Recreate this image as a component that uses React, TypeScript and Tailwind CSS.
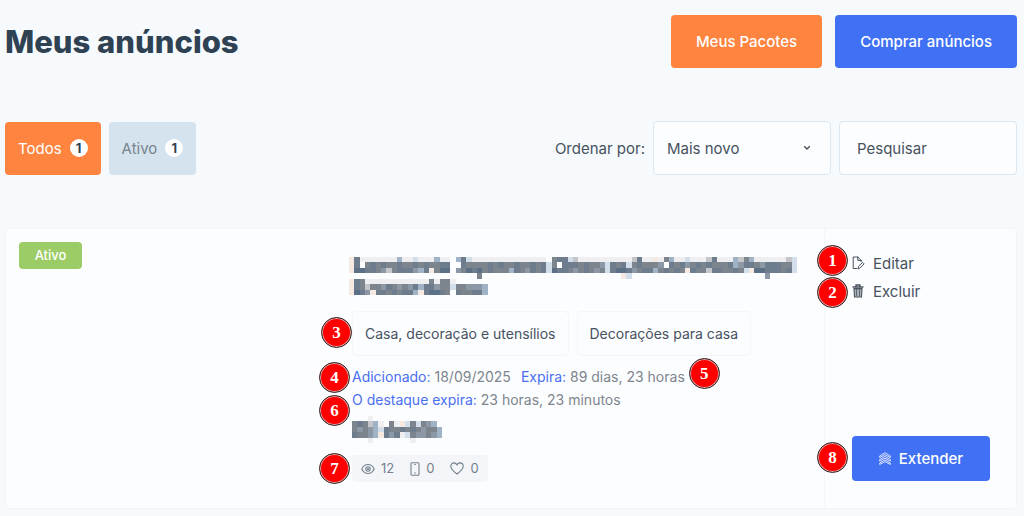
import React, { useState } from 'react';

type IconProps = { className?: string };

const EditIcon = ({ className }: IconProps) => (
  <svg className={className} viewBox="0 0 13 14" fill="none" stroke="currentColor" strokeLinejoin="round" strokeLinecap="round">
    <path d="M4.5 12.5H1.2V1h4.6l3.4 3.4v1.2M5.8 1v3.4h3.4" />
    <path d="M6 12.7l.6-2.4 4-3.9 1.5 1.5-4 4z" />
  </svg>
);

const TrashIcon = ({ className }: IconProps) => (
  <svg className={className} viewBox="0 0 12 14" fill="none" stroke="currentColor">
    <path d="M1 3h10M4 2.8V1h4v1.8" strokeWidth="1.3" strokeLinecap="round" />
    <path d="M2 4.6h8l-.5 8.4h-7z" fill="currentColor" fillOpacity="0.45" strokeWidth="1.1" />
    <path d="M4.5 5v7M7.5 5v7" strokeWidth=".8" />
  </svg>
);

const EyeIcon = ({ className }: IconProps) => (
  <svg className={className} viewBox="0 0 14 12" fill="none" stroke="currentColor" strokeWidth="1.1">
    <path d="M.8 6C2 3.300 4.300 1.500 7 1.500S12 3.300 13.200 6C12 8.700 9.700 10.500 7 10.500S2 8.700.8 6z" />
    <circle cx="7" cy="6" r="2.200" />
    <circle cx="7" cy="6" r=".5" fill="currentColor" />
  </svg>
);

const PhoneIcon = ({ className }: IconProps) => (
  <svg className={className} viewBox="0 0 10 14" fill="none" stroke="currentColor" strokeWidth="1.1">
    <rect x="1" y=".8" width="8" height="12.4" rx="1" />
    <path d="M4.200 11h1.600M4.200 2.500h1.600" />
  </svg>
);

const HeartIcon = ({ className }: IconProps) => (
  <svg className={className} viewBox="0 0 14 13" fill="none" stroke="currentColor" strokeWidth="1.1" strokeLinejoin="round">
    <path d="M7 12C4 9.800.8 7.300.8 4.300.8 2.300 2.200.9 4 .9c1.300 0 2.400.7 3 2 .6-1.300 1.700-2 3-2 1.800 0 3.200 1.400 3.200 3.400C13.200 7.300 10 9.800 7 12z" />
  </svg>
);

const ExtendIcon = ({ className }: IconProps) => (
  <svg className={className} viewBox="0 0 12 13" fill="none" stroke="currentColor" strokeWidth=".8" strokeLinejoin="round">
    <path d="M.7 3.900L6 .7l5.300 3.200v1.700L6 2.600.7 5.600z" />
    <path d="M.7 7.500L6 4.400l5.300 3.100v1.700L6 6.200.7 9.200z" />
    <path d="M.7 11L6 7.900l5.300 3.100v1.500L6 9.600.7 12.500z" />
  </svg>
);

const ChevronIcon = ({ className }: IconProps) => (
  <svg className={className} viewBox="0 0 8 6" fill="none" stroke="currentColor" strokeWidth="1.4">
    <path d="M1.200 1.200L4 4l2.800-2.800" />
  </svg>
);

// Censored text: every letter is one shade of the mosaic
const shades: Record<string, string> = {
  a: '#f5e9e1',
  b: '#efeff2',
  c: '#d2deea',
  d: '#c5c6ca',
  e: '#9fb2c6',
  f: '#8c98a5',
  g: '#7c858e',
  h: '#6e7d8d',
  i: '#5b6f86',
};

const titleMosaic = [
  'ahbbbbbbbebbcbbbebb ehcbbbbbbbbbbbbbb ghhcdbbbbbbbbbbdhbbabgebbcbbbdhbbbedgebbbbbbdc',
  'ah ghghgghgghghgghh  hgggghghgghgghghcg hhhghggfchghcghgggf hghfghghggghefhhgfhhhggc',
  'aiihhgfdghhhfehagii fgihighgggehgfhghcihhgfghgfgchiihfghheghghgahggdhhgghgcaiihhhghc',
  '                        g                          ac                         f     ',
  'ahgbbbbbbbbbbbbgbggb                                                                ',
  'ahgdggfhgfgfhehhfggcggfffe                                                          ',
  'aihfahhghghheahiihg hgghhe                                                          ',
];

const priceMosaic = [
  '   b             ',
  'ghgdeb gbacgcgfe ',
  'gfgfechgghghgfgge',
  'hggfeahfhbcgffgfe',
  '   b       b     ',
];

function Mosaic({ rows, label, className }: { rows: string[]; label: string; className?: string }) {
  return (
    <svg
      className={className}
      viewBox={`0 0 ${rows[0].length * 16} ${rows.length * 16}`}
      preserveAspectRatio="none"
      shapeRendering="crispEdges"
      role="img"
      aria-label={label}
    >
      {rows.map((row, y) =>
        row.split('').map((cell, x) =>
          shades[cell] ? <rect key={`${x}-${y}`} x={x * 16} y={y * 16} width={16} height={16} fill={shades[cell]} /> : null
        )
      )}
    </svg>
  );
}

function Marker({ n, className }: { n: number; className: string }) {
  return (
    <span
      className={`absolute flex size-[31px] items-center justify-center rounded-full border border-[#333] bg-[#fe0000] font-['Liberation_Serif',serif] text-[17px] leading-none font-bold text-white ring-1 ring-[#d9a9a9] ring-inset ${className}`}
    >
      {n}
    </span>
  );
}

function Tab({ label, count, active, onClick }: { label: string; count: number; active: boolean; onClick: () => void }) {
  return (
    <button
      onClick={onClick}
      className={`flex h-[53px] items-center gap-2 rounded px-[13px] ${active ? 'bg-[#fe8440] text-white' : 'bg-[#d5e3ee] text-[#77838f]'}`}
    >
      {label}
      <span className="flex size-[18px] items-center justify-center rounded-full bg-white text-[13px] font-bold text-[#2f4254]">
        {count}
      </span>
    </button>
  );
}

function App() {
  const [tab, setTab] = useState('todos');
  const [order, setOrder] = useState('novo');
  const [search, setSearch] = useState('');

  return (
    <div className="min-h-screen bg-[#f7fafd] pt-[15px] pr-[7px] pb-[7px] pl-[5px] font-[Inter,sans-serif] text-[15px] leading-[23px] text-[#47525e]">
      {/* Header */}
      <header className="flex items-center justify-between">
        <h1 className="text-[31px] leading-[40px] font-extrabold text-[#2f4254]">Meus anúncios</h1>
        <div className="flex gap-[13px] font-medium text-white">
          <button className="h-[53px] rounded bg-[#fe8440] px-[25px]">Meus Pacotes</button>
          <button className="h-[53px] rounded bg-[#4071f4] px-[25px]">Comprar anúncios</button>
        </div>
      </header>

      {/* Filters */}
      <div className="mt-[53px] flex items-center justify-between">
        <div className="flex gap-2">
          <Tab label="Todos" count={1} active={tab === 'todos'} onClick={() => setTab('todos')} />
          <Tab label="Ativo" count={1} active={tab === 'ativo'} onClick={() => setTab('ativo')} />
        </div>
        <div className="flex items-center gap-2">
          <label htmlFor="order">Ordenar por:</label>
          <div className="relative">
            <select
              id="order"
              value={order}
              onChange={(e) => setOrder(e.target.value)}
              className="h-[54px] w-[178px] appearance-none rounded border border-[#dbe6f0] bg-[#fcfdff] px-[13px]"
            >
              <option value="novo">Mais novo</option>
              <option value="antigo">Mais antigo</option>
            </select>
            <ChevronIcon className="pointer-events-none absolute top-6 right-5 h-[6px] w-2" />
          </div>
          <input
            type="text"
            aria-label="Pesquisar"
            placeholder="Pesquisar"
            value={search}
            onChange={(e) => setSearch(e.target.value)}
            className="h-[54px] w-[178px] rounded border border-[#dbe6f0] bg-[#fcfdff] px-[17px] placeholder:text-[#47525e]"
          />
        </div>
      </div>

      {/* Listing */}
      <article className="mt-[53px] grid min-h-[281px] grid-cols-[346px_1fr_192px] rounded border border-[#f2f4f8] bg-[#fcfdff]">
        <div className="p-[13px]">
          <span className="inline-flex h-[27px] w-[63px] items-center justify-center rounded bg-[#9ccc65] text-[13px] font-medium text-white">
            Ativo
          </span>
        </div>

        <div className="flex flex-col items-start pt-7 pb-[26px]">
          <h2>
            <Mosaic rows={titleMosaic} label="Título do anúncio" className="-ml-[3px] block h-[38px] w-[448px]" />
          </h2>
          <div className="relative mt-4 flex gap-2 text-[14px]">
            <Marker n={3} className="top-[6px] right-full" />
            <a href="#" className="rounded border border-[#f4f6f9] px-3 py-[10px]">Casa, decoração e utensílios</a>
            <a href="#" className="rounded border border-[#f4f6f9] px-3 py-[10px]">Decorações para casa</a>
          </div>
          <div className="relative mt-[9px] flex gap-[10px] text-[14px] text-[#7d858d]">
            <Marker n={4} className="top-[-3px] right-full mr-[2px]" />
            <p><span className="text-[#4a6ff0]">Adicionado:</span> 18/09/2025</p>
            <p><span className="text-[#4a6ff0]">Expira:</span> 89 dias, 23 horas</p>
            <Marker n={5} className="top-[-7px] left-full ml-1" />
          </div>
          <p className="relative text-[14px] text-[#7d858d]">
            <Marker n={6} className="top-[7px] right-full mr-[2px]" />
            <span className="text-[#4a6ff0]">O destaque expira:</span> 23 horas, 23 minutos
          </p>
          <Mosaic rows={priceMosaic} label="Preço" className="mt-[5px] block h-[27px] w-[90px]" />
          <div className="relative mt-3 flex h-[27px] items-center gap-4 rounded bg-[#f3f5f9] px-[9px] text-[13px] text-[#73808d]">
            <Marker n={7} className="top-[-2px] right-full mr-[2px]" />
            <span className="flex items-center gap-[6px]"><EyeIcon className="h-3 w-[14px]" />12</span>
            <span className="flex items-center gap-[6px]"><PhoneIcon className="h-[14px] w-[10px]" />0</span>
            <span className="flex items-center gap-[6px]"><HeartIcon className="h-[13px] w-[14px]" />0</span>
          </div>
        </div>

        <aside className="flex flex-col items-start border-l border-[#f4f6f9] pt-5 pb-[27px] pl-[27px]">
          <button className="relative flex h-7 items-center gap-2">
            <Marker n={1} className="top-[-4px] right-full mr-1" />
            <EditIcon className="h-[14px] w-[13px]" />
            Editar
          </button>
          <button className="relative flex h-7 items-center gap-[9px]">
            <Marker n={2} className="top-0 right-full mr-1" />
            <TrashIcon className="h-[14px] w-3" />
            Excluir
          </button>
          <button className="relative mt-auto flex h-[45px] w-[138px] items-center justify-center gap-2 rounded bg-[#4071f4] font-medium text-white">
            <Marker n={8} className="top-[6px] right-full mr-1" />
            <ExtendIcon className="h-[13px] w-3" />
            Extender
          </button>
        </aside>
      </article>
    </div>
  );
}

export default App;
